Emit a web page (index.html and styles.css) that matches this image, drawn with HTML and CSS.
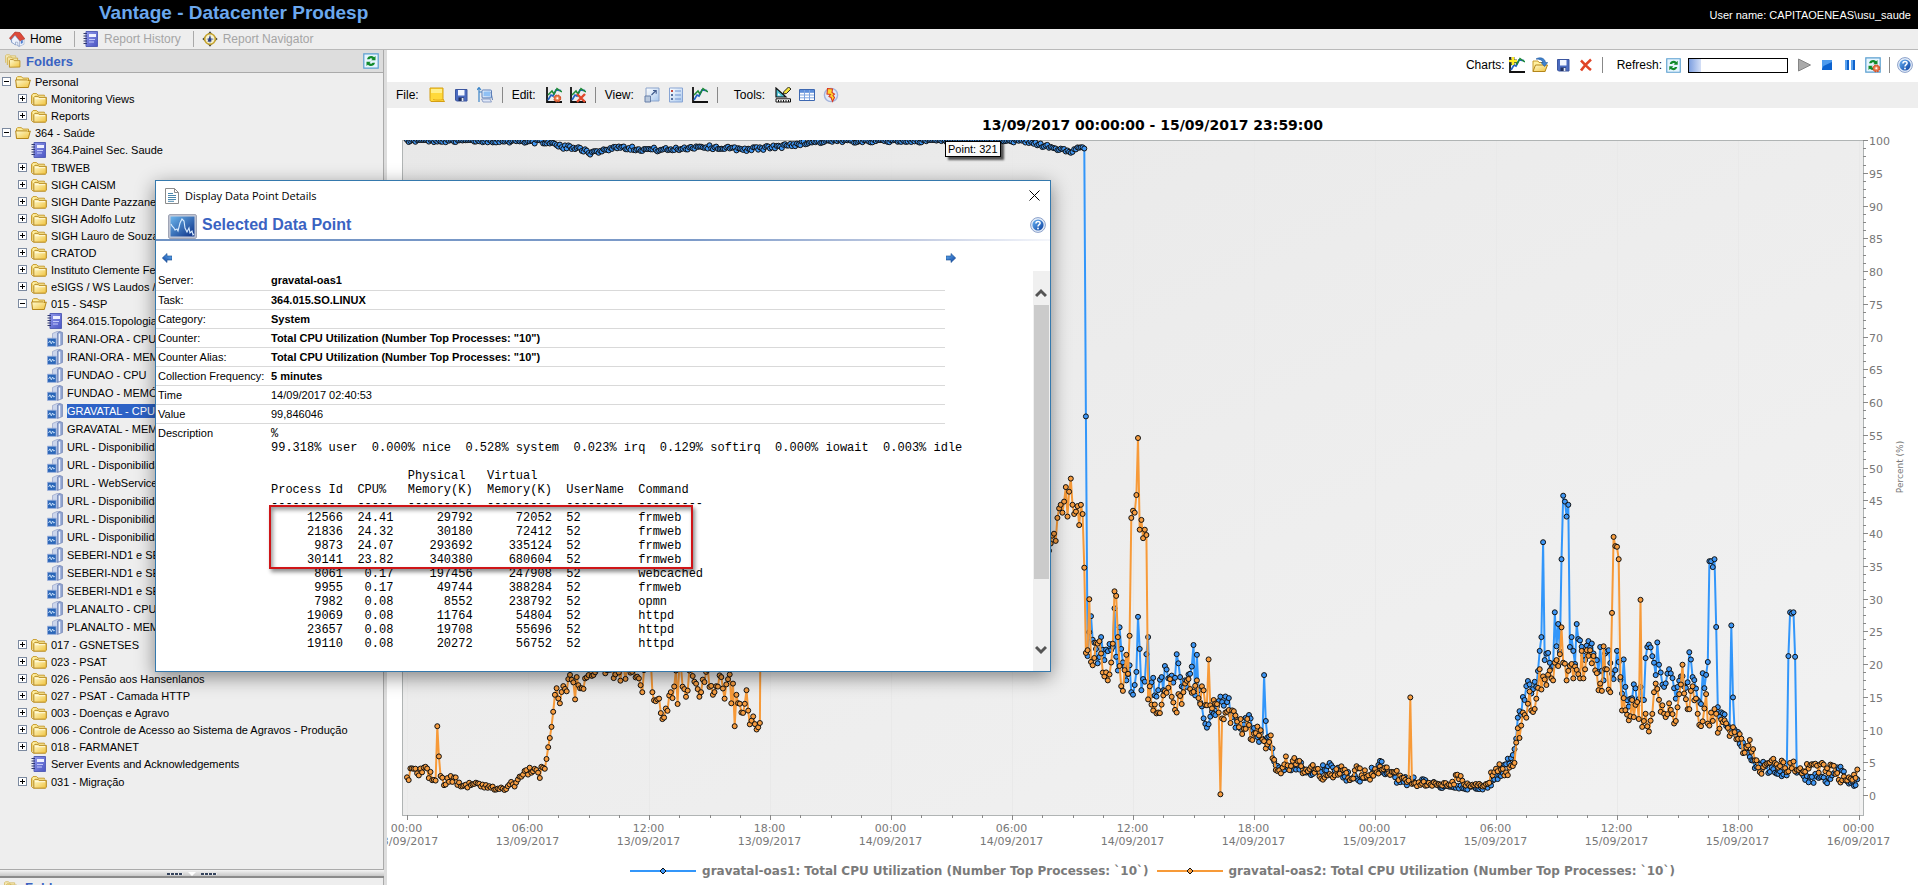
FILE: index.html
```html
<!DOCTYPE html>
<html lang="pt-BR">

<head>
    <meta charset="UTF-8">
    <meta name="viewport" content="width=device-width, initial-scale=1.0">
    <title>Vantage - Datacenter Prodesp</title>
    <link rel="stylesheet" href="styles.css">
</head>

<body>
    <!-- icon sprite -->
    <svg class="sprite" aria-hidden="true">
        <defs>
            <linearGradient id="gFolder" x1="0" y1="0" x2="1" y2="1">
                <stop offset="0" stop-color="#fffbd0"/><stop offset="1" stop-color="#f0c23c"/>
            </linearGradient>
            <linearGradient id="gBlue" x1="0" y1="0" x2="1" y2="1">
                <stop offset="0" stop-color="#6ab4f5"/><stop offset="1" stop-color="#0a3f9e"/>
            </linearGradient>
            <linearGradient id="gBook" x1="0" y1="0" x2="1" y2="1">
                <stop offset="0" stop-color="#8f97ea"/><stop offset="1" stop-color="#4a55c4"/>
            </linearGradient>
            <linearGradient id="gScreen" x1="0" y1="0" x2="1" y2="1">
                <stop offset="0" stop-color="#6bb5ec"/><stop offset="1" stop-color="#0b2f86"/>
            </linearGradient>
            <linearGradient id="gPale" x1="0" y1="0" x2="1" y2="1">
                <stop offset="0" stop-color="#ffffff"/><stop offset="1" stop-color="#a9c8ee"/>
            </linearGradient>
        </defs>
        <symbol id="i-folder" viewBox="0 0 16 16">
            <path d="M.7 12.5V4.2L2 2.6h3.6L7 4.2h6.4v1.2" fill="#fff0a0" stroke="#c79a2a"/>
            <path d="M.7 4.5v8.3l2 1.6" fill="none" stroke="#c79a2a"/>
            <path d="M2.8 14.2V6.6l1.1-1.3h3.2l.8 1h7.4v7l-.9.9z" fill="url(#gFolder)" stroke="#b4861b"/>
            <path d="M4 7.7h10" stroke="#fffbe0"/>
        </symbol>
        <symbol id="i-folder-open" viewBox="0 0 16 16">
            <path d="M1.5 13.5V3.7l1-1h4l1.2 1.4h5.8v2" fill="#fff0a0" stroke="#c79a2a"/>
            <path d="M1.5 13.5L.7 5.9h11.7l.6.7 2.3-.6-2 7.5z" fill="url(#gFolder)" stroke="#b4861b"/>
        </symbol>
        <symbol id="i-folders" viewBox="0 0 18 16">
            <path d="M.6 10V2l1-1h3.6l1 1.2H12V4" fill="#f5e9b8" stroke="#d6bd6c"/>
            <path d="M2.6 12.5V4.5l1-1h3.6l1 1.2h6V7" fill="#f5e3a0" stroke="#c9a845"/>
            <path d="M5 15V7.4l1-1h3.4l1 1.2h6.4v7.2z" fill="url(#gFolder)" stroke="#b98f28"/>
        </symbol>
        <symbol id="i-book" viewBox="0 0 16 16">
            <path d="M3 .5h11.5v15H3z" fill="url(#gBook)" stroke="#5560b8"/>
            <path d="M6 3h7v3H6z" fill="#eef0ff"/>
            <path d="M6 8.5h6M6 11h5" stroke="#c3c9fb"/>
            <path d="M.5 2.5H4M.5 5H4M.5 7.5H4M.5 10H4M.5 12.5H4" stroke="#333a70"/>
        </symbol>
        <symbol id="i-server" viewBox="0 0 16 16">
            <path d="M5.500 2.500L10 .5h3l-2 1.500V15l-5.500-.5z" fill="#ccd6ec" stroke="#93a1c8" stroke-width=".7"/>
            <path d="M10.500 2L13 .5l2.500 1v12l-5 2z" fill="#8ea2d0" stroke="#7385b5" stroke-width=".7"/>
            <path d="M12.500 2.500v11.700" stroke="#f2f5fc" stroke-width="1.500"/>
            <path d="M.4 7.200h8.800v8.200H.4z" fill="#2a66b8" stroke="#9fb3de" stroke-width=".8"/>
            <path d="M1.500 12l1.400-2.200 1.400 3 1.300-2.800 1.200 2.200 1-1" fill="none" stroke="#cfe4fa" stroke-width=".9"/>
        </symbol>
        <symbol id="i-home" viewBox="0 0 16 16">
            <path d="M6 8l5-4 4 4.5v4.7L10 15.5 6 13z" fill="#f5f8ff" stroke="#8ea4cb" stroke-width=".6"/>
            <path d="M1.600 8L5 5.800 6.400 14 2.200 11.200z" fill="#5b86c4"/>
            <path d="M6 1L.4 7.300l1.500 1.200L6 4l4.800 6 5-2.200L11 1.600z" fill="#dd4a3a" stroke="#a82b20" stroke-width=".6"/>
            <path d="M6 4.400L2.600 8.200v3l4 2.800v-3l2.200.3v3.300l1.800.6V10z" fill="#eef3fd" stroke="#7b90ba" stroke-width=".6"/>
            <path d="M11.800 9.800l2-.8v3l-2 .9z" fill="#4b7ed1"/>
        </symbol>
        <symbol id="i-compass" viewBox="0 0 16 16">
            <path d="M8 .3L10.200 3H5.800zM8 15.700L5.800 13h4.400zM.3 8L3 5.800v4.400zM15.700 8L13 10.200V5.800z" fill="#4a4630"/>
            <circle cx="8" cy="8" r="5.300" fill="#f7f3d2" stroke="#c5a32d" stroke-width="1.600"/>
            <path d="M8 3.500L9 7l3 1-3 1.400L8 12.500 7 9.400 4.400 8 7 7z" fill="#7f8fb8"/>
            <path d="M5.500 10.800L8 4.500l1.500 6z" fill="#2d3f7a"/>
        </symbol>
        <symbol id="i-refresh" viewBox="0 0 16 16">
            <path d="M.8.8h14.400v14.400H.8z" fill="#e6f5ff" stroke="#5b9fd0" stroke-width="1.200"/>
            <path d="M4 6.300h2.500c.5-1.300 2-1.500 3-.3L8.200 7.200h4.300V3l-1.300 1.200C8.700 1.900 4.600 3 4 6.300z" fill="#118a2a"/>
            <path d="M12 9.700H9.500c-.5 1.300-2 1.500-3 .3l1.300-1.200H3.500V13l1.300-1.200c2.500 2.300 6.600 1.200 7.200-2.100z" fill="#118a2a"/>
        </symbol>
        <symbol id="i-gear" viewBox="0 0 16 16">
            <circle cx="11.300" cy="11.300" r="3.300" fill="#f3a078" stroke="#d4532a" stroke-width="1.300" stroke-dasharray="1.700 .9"/>
            <circle cx="11.300" cy="11.300" r="2.700" fill="#ee8d60" stroke="#d4532a" stroke-width=".8"/>
            <circle cx="11.300" cy="11.300" r="1" fill="#fff"/>
        </symbol>
        <symbol id="i-chart" viewBox="0 0 16 16">
            <path d="M1 0v15h15" fill="none" stroke="#111" stroke-width="1.800"/>
            <path d="M2 13l3-5 2 1 3-6 5 .6" fill="none" stroke="#2163c4" stroke-width="1.700"/>
            <path d="M2 8l4-4 2 3 3-5.500 2 1.500 3 2" fill="none" stroke="#1c8a35" stroke-width="1.500"/>
        </symbol>
        <symbol id="i-note" viewBox="0 0 16 16">
            <path d="M1 1h13v10.500c.2 1.500.8 2 1.600 3H2c-1-.5-1-1.500-1-3z" fill="#ffd93a" stroke="#d49e12"/>
            <path d="M2 2h11v4H2z" fill="#ffef8a"/>
            <path d="M4 12.500c3 .8 7 .8 10 0" stroke="#e5aa18" fill="none"/>
        </symbol>
        <symbol id="i-save" viewBox="0 0 16 16">
            <path d="M2.500 2.500h11.500v11.500H3.500l-1-1z" fill="#4b6bc0" stroke="#3c569f"/>
            <path d="M5 3h6.500v5.500H5z" fill="#f2f6ff"/>
            <path d="M5.500 10.500h5.500v3.500H5.500z" fill="#20305f"/><path d="M8.700 11h1.800v3H8.700z" fill="#e5ebfa"/>
        </symbol>
        <symbol id="i-export" viewBox="0 0 16 16">
            <path d="M2 15V1M0 3l2-2.500L4 3M2 5h5" fill="none" stroke="#3b84c9" stroke-width="1.200"/>
            <rect x="5" y="3" width="9.500" height="8" rx="1" fill="url(#gPale)" stroke="#5d7fb8"/>
            <path d="M6.500 4.500H13v4.500H6.500z" fill="#8fc0f4"/>
            <path d="M4.500 12h8.500l1.500 3H6z" fill="#dfe7f7" stroke="#7a8fbd" stroke-width=".8"/>
            <path d="M14 5l1.500 8" stroke="#5d7fb8"/>
        </symbol>
        <symbol id="i-cross" viewBox="0 0 16 16">
            <path d="M3 3.500c2 2 6 6.500 10 9.500M13 2.500C9 6 6 9 3 13.500" fill="none" stroke="#e04427" stroke-width="2.600"/>
        </symbol>
        <symbol id="i-resize" viewBox="0 0 16 16">
            <path d="M2 1h13v13H6" fill="url(#gPale)" stroke="#8ba4cc"/>
            <path d="M2 1v8" stroke="#8ba4cc"/>
            <path d="M1 9h5.500v6H1z" fill="#b9c8dd" stroke="#667fa8"/>
            <path d="M7.500 8L12 3.500M9 3.500h3.200v3.200" fill="none" stroke="#3f5a8c" stroke-width="1.100"/>
        </symbol>
        <symbol id="i-list" viewBox="0 0 16 16">
            <path d="M1.500 1h13v14h-13z" fill="url(#gPale)" stroke="#88a5d4"/>
            <path d="M3 3h2v2H3z" fill="#c4473c"/><path d="M3 7h2v2H3zM3 11h2v2H3z" fill="#56719f"/>
            <path d="M7 4h6M7 8h6M7 12h6" stroke="#6f93d0"/>
        </symbol>
        <symbol id="i-design" viewBox="0 0 16 16">
            <path d="M1 1v9h10z" fill="#4cc2d4" stroke="#111" stroke-width="1.200"/><path d="M3 6v2.500h3z" fill="#fff"/>
            <path d="M8 7l1-2.500L13.500 0 16 2l-4.500 4.500z" fill="#f2e13a" stroke="#111" stroke-width=".9"/>
            <path d="M1 11.800h14.500V15H1z" fill="#fff" stroke="#111"/>
            <path d="M3.500 13v2M6 13v2M8.500 13v2M11 13v2M13.500 13v2" stroke="#111"/>
        </symbol>
        <symbol id="i-table" viewBox="0 0 16 16">
            <path d="M.5 2.500h15v11H.5z" fill="#fff" stroke="#3d68b1"/><path d="M1 3h14v2.500H1z" fill="#5c8edb"/>
            <path d="M1 5.500h14M1 8h14M1 10.800h14M5.500 3v10M10.500 3v10" stroke="#7ea5e0"/>
        </symbol>
        <symbol id="i-bolt" viewBox="0 0 16 16">
            <circle cx="8" cy="8" r="6.600" fill="#e3eaf8" stroke="#a4b4dc" stroke-width="1.400"/>
            <path d="M4.500 1.500l5 .5-.5 3.500 2.500 1.500-1.500 1.500 1.500 2-2 4-1.500-4-2-1 1.500-2L4 7z" fill="#ffd72e" stroke="#d93a22" stroke-width="1.100"/>
        </symbol>
        <symbol id="i-import" viewBox="0 0 16 16">
            <path d="M1 14.500V4h5l1 1.500h6v9z" fill="#fff0a0" stroke="#c79a2a"/>
            <path d="M1 14.500l2.500-6.500h12l-2.500 6.500z" fill="url(#gFolder)" stroke="#b4861b"/>
            <path d="M4 2c4-2.500 9-1 9.500 3.500h2.200L12.500 9.500 9 5.500h2C10.500 3 8 2.200 4 2z" fill="#3f83cf" stroke="#24589c" stroke-width=".6"/>
        </symbol>
        <symbol id="i-help" viewBox="0 0 16 16">
            <circle cx="8" cy="8" r="7.400" fill="#e6eefa" stroke="#8ba0c9"/>
            <circle cx="8" cy="8" r="5.600" fill="url(#gBlue)"/>
            <path d="M5.900 6.600c0-3 4.400-2.800 4.200-.3C10 7.700 8 7.700 8 9.500" fill="none" stroke="#fff" stroke-width="1.500"/>
            <circle cx="8" cy="11.500" r=".9" fill="#fff"/>
        </symbol>
        <symbol id="i-play" viewBox="0 0 16 16"><path d="M2.500 2l12 6-12 6z" fill="#aaa" stroke="#858585"/></symbol>
        <symbol id="i-stop" viewBox="0 0 16 16"><path d="M3 3h10v10H3z" fill="#0b62cf"/><path d="M3 3h10v2L4.500 9 3 12z" fill="#4d9bee"/></symbol>
        <symbol id="i-pause" viewBox="0 0 16 16"><path d="M3 3h4v10H3zM9 3h4v10H9z" fill="#0f62cc"/><path d="M3 3h2v10H3zM9 3h2v10H9z" fill="#5ca3ee"/></symbol>
        <symbol id="i-doc" viewBox="0 0 14 16">
            <path d="M.5.5h9l4 4v11H.5z" fill="#fff" stroke="#8b8b8b"/><path d="M9.500.5v4h4" fill="none" stroke="#8b8b8b"/>
            <path d="M3 5.500h5M3 7.500h8M3 9.500h8M3 11.500h8M3 13.300h6" stroke="#4a87ad"/>
        </symbol>
        <symbol id="i-wave" viewBox="0 0 29 25">
            <rect x=".7" y=".7" width="27.600" height="23.600" rx="1" fill="#c9cedc" stroke="#8e94a8"/>
            <path d="M2.500 2.500h24v20h-24z" fill="url(#gScreen)"/>
            <path d="M3 10l1 2 2 2 1 2 2-1 1 2 2-8 2-4 2 2 1 7 2 4 2-4 1 5 2-2 1 4 1-1" fill="none" stroke="#d9ecff" stroke-width="1.100"/>
        </symbol>
        <symbol id="i-arrow" viewBox="0 0 10 10"><path d="M0 3h5V.500L9.700 5 5 9.500V7H0z" fill="url(#gBlue)" stroke="#12468c" stroke-width=".6"/></symbol>
    </svg>

    <header class="banner">
        <h1 class="banner-title">Vantage - Datacenter Prodesp</h1>
        <span class="banner-user">User name: CAPITAOENEAS\usu_saude</span>
    </header>

    <nav class="menu">
        <a class="menu-item" href="#"><svg class="icon"><use href="#i-home"/></svg>Home</a>
        <a class="menu-item disabled" href="#"><svg class="icon"><use href="#i-book"/></svg>Report History</a>
        <a class="menu-item disabled" href="#"><svg class="icon"><use href="#i-compass"/></svg>Report Navigator</a>
    </nav>

    <div class="workspace">
        <aside class="sidebar">
            <div class="panel-head">
                <svg class="icon"><use href="#i-folders"/></svg>
                <h2 class="panel-title">Folders</h2>
                <button class="icon-btn" type="button" aria-label="Refresh folders"><svg class="icon"><use href="#i-refresh"/></svg></button>
            </div>
            <ul class="tree" id="tree"></ul>
            <div class="splitter">
                <i class="dots"></i><i class="down"></i><i class="dots"></i>
            </div>
            <div class="panel-next">
                <svg class="icon"><use href="#i-folders"/></svg>
                <span class="panel-title">Folders</span>
            </div>
        </aside>

        <main class="main">
            <div class="bar bar-top">
                <span class="bar-label">Charts:</span>
                <button class="icon-btn" type="button" aria-label="New chart"><svg class="icon"><use href="#i-chart"/><path d="M4 0v8M0 4h8" stroke="#6d6414" stroke-width="3"/><path d="M4 0v8M0 4h8" stroke="#ffee22" stroke-width="2"/></svg></button>
                <button class="icon-btn" type="button" aria-label="Open chart"><svg class="icon"><use href="#i-import"/></svg></button>
                <button class="icon-btn" type="button" aria-label="Save chart"><svg class="icon"><use href="#i-save"/></svg></button>
                <button class="icon-btn" type="button" aria-label="Delete chart"><svg class="icon"><use href="#i-cross"/></svg></button>
                <i class="sep wide"></i>
                <span class="bar-label">Refresh:</span>
                <button class="icon-btn" type="button" aria-label="Refresh"><svg class="icon small"><use href="#i-refresh"/></svg></button>
                <div class="progress"><div class="progress-fill"></div></div>
                <button class="icon-btn" type="button" aria-label="Play"><svg class="icon"><use href="#i-play"/></svg></button>
                <button class="icon-btn" type="button" aria-label="Stop"><svg class="icon"><use href="#i-stop"/></svg></button>
                <button class="icon-btn" type="button" aria-label="Pause"><svg class="icon"><use href="#i-pause"/></svg></button>
                <button class="icon-btn" type="button" aria-label="Refresh options"><svg class="icon"><use href="#i-refresh"/><use href="#i-gear"/></svg></button>
                <i class="sep"></i>
                <button class="icon-btn" type="button" aria-label="Help"><svg class="icon"><use href="#i-help"/></svg></button>
            </div>
            <div class="bar bar-tools">
                <span class="bar-label">File:</span>
                <button class="icon-btn" type="button" aria-label="Notes"><svg class="icon"><use href="#i-note"/></svg></button>
                <button class="icon-btn" type="button" aria-label="Save"><svg class="icon"><use href="#i-save"/></svg></button>
                <button class="icon-btn" type="button" aria-label="Export"><svg class="icon"><use href="#i-export"/></svg></button>
                <i class="sep"></i>
                <span class="bar-label">Edit:</span>
                <button class="icon-btn" type="button" aria-label="Edit chart"><svg class="icon"><use href="#i-chart"/><use href="#i-gear"/></svg></button>
                <button class="icon-btn" type="button" aria-label="Remove chart"><svg class="icon"><use href="#i-chart"/><path d="M7 7l8 8M15 7l-8 8" stroke="#e0482a" stroke-width="2.400"/></svg></button>
                <i class="sep"></i>
                <span class="bar-label">View:</span>
                <button class="icon-btn" type="button" aria-label="Resize"><svg class="icon"><use href="#i-resize"/></svg></button>
                <button class="icon-btn" type="button" aria-label="Legend"><svg class="icon"><use href="#i-list"/></svg></button>
                <button class="icon-btn" type="button" aria-label="Chart"><svg class="icon"><use href="#i-chart"/></svg></button>
                <i class="sep wide"></i>
                <span class="bar-label">Tools:</span>
                <button class="icon-btn" type="button" aria-label="Design"><svg class="icon"><use href="#i-design"/></svg></button>
                <button class="icon-btn" type="button" aria-label="Table"><svg class="icon"><use href="#i-table"/></svg></button>
                <button class="icon-btn" type="button" aria-label="Alerts"><svg class="icon"><use href="#i-bolt"/></svg></button>
            </div>

            <section class="report">
                <h2 class="report-title">13/09/2017 00:00:00 - 15/09/2017 23:59:00</h2>
                <svg class="chart" id="chart" role="img" aria-label="Total CPU Utilization"></svg>
                <div class="legend">
                    <span class="legend-item"><svg class="legend-key blue"><path d="M0 5h66"/><path class="mark" d="M33 2l3 3-3 3-3-3z"/></svg>gravatal-oas1: Total CPU Utilization (Number Top Processes: `10`)</span>
                    <span class="legend-item"><svg class="legend-key orange"><path d="M0 5h66"/><path class="mark" d="M33 2l3 3-3 3-3-3z"/></svg>gravatal-oas2: Total CPU Utilization (Number Top Processes: `10`)</span>
                </div>
            </section>
            <div class="tooltip">Point: 321</div>
        </main>
    </div>

    <section class="dialog" role="dialog" aria-labelledby="dialogTitle">
        <div class="dialog-bar">
            <svg class="doc-icon"><use href="#i-doc"/></svg>
            <span id="dialogTitle">Display Data Point Details</span>
            <button class="close" type="button" aria-label="Close"><svg class="close-icon"><path d="M.5.5l10 10M10.500.5l-10 10"/></svg></button>
        </div>
        <div class="dialog-head">
            <svg class="wave-icon"><use href="#i-wave"/></svg>
            <h2 class="dialog-heading">Selected Data Point</h2>
            <button class="icon-btn" type="button" aria-label="Help"><svg class="icon"><use href="#i-help"/></svg></button>
        </div>
        <div class="dialog-nav">
            <button class="icon-btn" type="button" aria-label="Previous point"><svg class="arrow back"><use href="#i-arrow"/></svg></button>
            <button class="icon-btn" type="button" aria-label="Next point"><svg class="arrow"><use href="#i-arrow"/></svg></button>
        </div>
        <div class="dialog-body">
            <div class="dialog-content">
                <table class="details">
                    <tr><th scope="row">Server:</th><td><b>gravatal-oas1</b></td></tr>
                    <tr><th scope="row">Task:</th><td><b>364.015.SO.LINUX</b></td></tr>
                    <tr><th scope="row">Category:</th><td><b>System</b></td></tr>
                    <tr><th scope="row">Counter:</th><td><b>Total CPU Utilization (Number Top Processes: "10")</b></td></tr>
                    <tr><th scope="row">Counter Alias:</th><td><b>Total CPU Utilization (Number Top Processes: "10")</b></td></tr>
                    <tr><th scope="row">Collection Frequency:</th><td><b>5 minutes</b></td></tr>
                    <tr><th scope="row">Time</th><td>14/09/2017 02:40:53</td></tr>
                    <tr><th scope="row">Value</th><td>99,846046</td></tr>
                    <tr class="last"><th scope="row">Description</th><td>
                        <div class="output">
<pre>%
99.318% user  0.000% nice  0.528% system  0.023% irq  0.129% softirq  0.000% iowait  0.003% idle

                   Physical   Virtual
Process Id  CPU%   Memory(K)  Memory(K)  UserName  Command
----------  -----  ---------  ---------  --------  ---------
     12566  24.41      29792      72052  52        frmweb
     21836  24.32      30180      72412  52        frmweb
      9873  24.07     293692     335124  52        frmweb
     30141  23.82     340380     680604  52        frmweb
      8061   0.17     197456     247908  52        webcached
      9955   0.17      49744     388284  52        frmweb
      7982   0.08       8552     238792  52        opmn
     19069   0.08      11764      54804  52        httpd
     23657   0.08      19708      55696  52        httpd
     19110   0.08      20272      56752  52        httpd</pre>
                            <div class="highlight"></div>
                        </div>
                    </td></tr>
                </table>
            </div>
            <div class="scrollbar">
                <button class="scroll-btn" type="button" aria-label="Scroll up"><svg class="chevron"><path d="M1 8l5-5 5 5"/></svg></button>
                <div class="scroll-thumb"></div>
                <button class="scroll-btn down" type="button" aria-label="Scroll down"><svg class="chevron"><path d="M1 2l5 5 5-5"/></svg></button>
            </div>
        </div>
    </section>

    <script src="script.js"></script>
</body>

</html>
```

FILE: styles.css
```css
* {
    box-sizing: border-box;
}

body {
    margin: 0;
    height: 100vh;
    display: flex;
    flex-direction: column;
    overflow: hidden;
    font-family: "Liberation Sans", Arial, sans-serif;
    font-size: 12px;
    color: #000;
    background-color: #fff;
}

h1,
h2,
pre,
ul {
    margin: 0;
    padding: 0;
}

.sprite {
    position: absolute;
    width: 0;
    height: 0;
}

.icon {
    display: block;
    width: 16px;
    height: 16px;
    flex: none;
}

.icon.small {
    width: 15px;
    height: 15px;
}

.icon-btn {
    padding: 0;
    border: 0;
    background: none;
    cursor: pointer;
}

/* top banner and menu */
.banner {
    flex: none;
    height: 29px;
    padding: 0 7px 3px 99px;
    display: flex;
    align-items: center;
    justify-content: space-between;
    background-color: #000;
}

.banner-title {
    font-size: 19px;
    line-height: 22px;
    color: #6ba8ee;
}

.banner-user {
    font-size: 11px;
    padding-top: 3px;
    color: #fff;
}

.menu {
    flex: none;
    height: 21px;
    padding-left: 9px;
    display: flex;
    align-items: center;
    background-color: #eee;
    border-bottom: 1px solid #b9b9b9;
}

.menu-item {
    display: flex;
    align-items: center;
    gap: 5px;
    height: 16px;
    padding-right: 12px;
    margin-right: 8px;
    color: #000;
    text-decoration: none;
    border-right: 1px solid #aaa;
}

.menu-item:last-child {
    border-right: 0;
}

.menu-item.disabled {
    color: #a5a5a5;
}

.workspace {
    flex: 1;
    min-height: 0;
    display: flex;
}

/* folder tree */
.sidebar {
    flex: none;
    width: 387px;
    display: flex;
    flex-direction: column;
    background-color: #eee;
    border-right: 3px solid #ddd;
    box-shadow: inset -1px 0 #aaa;
}

.panel-head {
    height: 23px;
    padding: 0 4px 0 5px;
    display: flex;
    align-items: center;
    gap: 5px;
    background-color: #ddd;
    border-bottom: 1px solid #aaa;
    border-right: 1px solid #aaa;
}

.panel-title {
    flex: 1;
    font-size: 13px;
    font-weight: bold;
    color: #3a63c2;
}

.tree {
    flex: 1;
    min-height: 0;
    list-style: none;
    font-size: 11px;
}

.tree-item {
    height: 17px;
    display: flex;
    align-items: center;
    gap: 4px;
    padding-left: 2px;
    white-space: nowrap;
}

.tree-item.report-item {
    height: 18px;
}

.tree-item.level-1 {
    padding-left: 18px;
}

.tree-item.level-2 {
    padding-left: 34px;
}

.tree-item .toggle {
    position: relative;
    flex: none;
    width: 9px;
    height: 9px;
    padding: 0;
    border: 1px solid #7c8aa0;
    background: linear-gradient(#fff 3px, #000 3px, #000 4px, #fff 4px) center / 5px 7px no-repeat #fff;
}

.tree-item .toggle.plus::after {
    content: "";
    position: absolute;
    left: 3px;
    top: 1px;
    width: 1px;
    height: 5px;
    background-color: #000;
}

.tree-item .toggle.none {
    visibility: hidden;
}

.tree-item a {
    line-height: 14px;
    color: #000;
    text-decoration: none;
}

.tree-item a.selected {
    color: #fff;
    background-color: #2d62c6;
}

.splitter {
    height: 9px;
    display: flex;
    align-items: center;
    justify-content: center;
    gap: 5px;
    background: linear-gradient(#aaa 1px, #f4f4f4 1px, #c8c8c8 7px, #8b8b8b 7px);
}

.splitter .dots {
    width: 16px;
    height: 2px;
    background: repeating-linear-gradient(90deg, #34435c 0 3px, #eee 3px 4px);
}

.splitter .down {
    border: 4px solid transparent;
    border-top-color: #fff;
    border-bottom: 0;
}

.panel-next {
    height: 7px;
    padding: 2px 4px 0;
    display: flex;
    gap: 5px;
    overflow: hidden;
}

/* toolbars */
.main {
    position: relative;
    flex: 1;
    min-width: 0;
    display: flex;
    flex-direction: column;
}

.bar {
    flex: none;
    display: flex;
    align-items: center;
    gap: 8px;
}

.bar-top {
    height: 32px;
    padding: 0 4px 2px 0;
    justify-content: flex-end;
    gap: 6px;
}

.bar-top .icon-btn {
    margin-right: 1px;
}

.bar-top .bar-label {
    margin-right: -2px;
}

.bar-tools {
    height: 26px;
    padding-left: 9px;
    background-color: #eee;
}

.bar-label + .icon-btn {
    margin-left: 2px;
}

.bar-top .bar-label + .icon-btn {
    margin-left: 0;
}

.sep {
    width: 1px;
    height: 16px;
    margin: 0 1px;
    background-color: #888;
}

.sep.wide {
    margin-right: 8px;
}

.progress {
    width: 100px;
    height: 15px;
    margin-right: 2px;
    border: 1px solid #000;
    background-color: #fff;
}

.progress-fill {
    width: 12px;
    height: 13px;
    background: linear-gradient(90deg, #7d9fe0, #d5e0f7);
}

/* chart */
.report {
    flex: 1;
    min-height: 0;
    display: flex;
    flex-direction: column;
}

.report-title {
    height: 24px;
    padding-top: 9px;
    font: bold 14px/16px "DejaVu Sans", Verdana, sans-serif;
    text-align: center;
}

.chart {
    display: block;
    width: 100%;
    flex: 1;
    min-height: 0;
    font-family: "DejaVu Sans", Verdana, sans-serif;
    font-size: 11px;
    fill: #777;
}

.chart .axis {
    stroke: #b0b4b4;
    fill: none;
}

.chart .tick {
    stroke: #888;
}

.chart .grid {
    stroke: #e9e9e9;
}

.chart .unit {
    font-size: 9px;
}

.series {
    fill: none;
    stroke-width: 2;
    stroke-linejoin: round;
}

.blue {
    stroke: #3296fa;
}

.orange {
    stroke: #f79a38;
}

.marker {
    stroke: #111;
    stroke-width: 1;
}

.marker.fill-blue,
.blue .mark {
    fill: #3f97f5;
}

.marker.fill-orange,
.orange .mark {
    fill: #f79d40;
}

.legend {
    height: 29px;
    padding-top: 1px;
    display: flex;
    align-items: center;
    justify-content: center;
    gap: 8px;
    font: bold 12px/16px "DejaVu Sans", Verdana, sans-serif;
    color: #7a7a7a;
}

.legend-item {
    display: flex;
    align-items: center;
    gap: 6px;
    white-space: nowrap;
}

.legend-key {
    width: 66px;
    height: 10px;
    stroke-width: 2;
}

.legend-key .mark {
    stroke: #111;
    stroke-width: 1;
}

.tooltip {
    position: absolute;
    left: 558px;
    top: 91px;
    padding: 0 2px;
    font-size: 11px;
    line-height: 14px;
    border: 1px solid #000;
    background-color: #fafafa;
    box-shadow: 3px 3px 2px rgba(0, 0, 0, 0.65);
}

/* data point window */
.dialog {
    position: absolute;
    left: 155px;
    top: 180px;
    width: 896px;
    height: 492px;
    display: flex;
    flex-direction: column;
    border: 1px solid #3579ad;
    background-color: #fff;
    box-shadow: 0 5px 18px rgba(0, 0, 0, 0.45);
}

.dialog-bar {
    height: 29px;
    padding: 0 10px 0 9px;
    display: flex;
    align-items: center;
    gap: 6px;
    font: 11px "Open Sans", "Segoe UI", sans-serif;
}

.doc-icon {
    width: 14px;
    height: 16px;
}

.close {
    margin-left: auto;
    padding: 0;
    border: 0;
    background: none;
}

.close-icon {
    display: block;
    width: 11px;
    height: 11px;
    stroke: #000;
}

.dialog-head {
    height: 31px;
    padding: 4px 4px 2px 12px;
    display: flex;
    align-items: center;
    gap: 5px;
    background: linear-gradient(90deg, #7093c4, #7d9bc9 60%, #c3cce2 85%, #f4f6fb) bottom / 100% 2px no-repeat;
}

.wave-icon {
    width: 29px;
    height: 25px;
}

.dialog-heading {
    flex: 1;
    font-size: 16px;
    line-height: 20px;
    padding-bottom: 3px;
    color: #3a63c2;
}

.dialog-head .icon-btn {
    padding-bottom: 4px;
}

.dialog-nav {
    height: 30px;
    width: 806px;
    padding: 3px 6px 0;
    display: flex;
    align-items: center;
    justify-content: space-between;
}

.arrow {
    display: block;
    width: 10px;
    height: 10px;
}

.arrow.back {
    transform: scaleX(-1);
}

.dialog-body {
    flex: 1;
    min-height: 0;
    display: flex;
}

.dialog-content {
    flex: 1;
    min-width: 0;
    overflow: hidden;
    padding-right: 88px;
}

.details {
    width: 100%;
    table-layout: fixed;
    border-collapse: collapse;
    font-size: 11px;
    line-height: 14px;
}

.details th,
.details td {
    height: 19px;
    padding: 2px 0 2px 2px;
    font-weight: normal;
    text-align: left;
    vertical-align: top;
    border-bottom: 1px solid #d9d9d9;
}

.details th {
    width: 113px;
    white-space: nowrap;
}

.details .last th,
.details .last td {
    border-bottom: 0;
}

.output {
    position: relative;
    padding-top: 1px;
}

.output pre {
    font: 12px/14px "Liberation Mono", "Courier New", monospace;
}

.highlight {
    position: absolute;
    left: -2px;
    top: 79px;
    width: 424px;
    height: 64px;
    border: 2px solid #cf1518;
    box-shadow: 2px 3px 4px rgba(0, 0, 0, 0.45), inset 2px 3px 4px rgba(0, 0, 0, 0.4);
}

.scrollbar {
    width: 17px;
    padding: 0 1px;
    display: flex;
    flex-direction: column;
    background-color: #f0f0f0;
}

.scroll-btn {
    height: 34px;
    padding: 9px 0 0 1px;
    border: 0;
    background: none;
}

.scroll-btn.down {
    margin-top: auto;
    padding: 0 0 8px 1px;
}

.chevron {
    display: block;
    width: 12px;
    height: 10px;
    fill: none;
    stroke: #555;
    stroke-width: 3;
}

.scroll-thumb {
    height: 274px;
    background-color: #cbcbcb;
}
```

FILE: script.js
```js
// [level, icon, label, toggle state]
const treeItems = [
    [0, 'folder-open', 'Personal', 'minus'],
    [1, 'folder', 'Monitoring Views', 'plus'],
    [1, 'folder', 'Reports', 'plus'],
    [0, 'folder-open', '364 - Saúde', 'minus'],
    [1, 'book', '364.Painel Sec. Saude'],
    [1, 'folder', 'TBWEB', 'plus'],
    [1, 'folder', 'SIGH CAISM', 'plus'],
    [1, 'folder', 'SIGH Dante Pazzanes', 'plus'],
    [1, 'folder', 'SIGH Adolfo Lutz', 'plus'],
    [1, 'folder', 'SIGH Lauro de Souza', 'plus'],
    [1, 'folder', 'CRATOD', 'plus'],
    [1, 'folder', 'Instituto Clemente Fer', 'plus'],
    [1, 'folder', 'eSIGS / WS Laudos /', 'plus'],
    [1, 'folder-open', '015 - S4SP', 'minus'],
    [2, 'book', '364.015.Topologia'],
    [2, 'server', 'IRANI-ORA - CPU'],
    [2, 'server', 'IRANI-ORA - MEMÓRIA'],
    [2, 'server', 'FUNDAO - CPU'],
    [2, 'server', 'FUNDAO - MEMÓRIA'],
    [2, 'server', 'GRAVATAL - CPU', 'selected'],
    [2, 'server', 'GRAVATAL - MEMÓRIA'],
    [2, 'server', 'URL - Disponibilidade'],
    [2, 'server', 'URL - Disponibilidade'],
    [2, 'server', 'URL - WebService'],
    [2, 'server', 'URL - Disponibilidade'],
    [2, 'server', 'URL - Disponibilidade'],
    [2, 'server', 'URL - Disponibilidade'],
    [2, 'server', 'SEBERI-ND1 e SEBERI'],
    [2, 'server', 'SEBERI-ND1 e SEBERI'],
    [2, 'server', 'SEBERI-ND1 e SEBERI'],
    [2, 'server', 'PLANALTO - CPU'],
    [2, 'server', 'PLANALTO - MEMÓRIA'],
    [1, 'folder', '017 - GSNETSES', 'plus'],
    [1, 'folder', '023 - PSAT', 'plus'],
    [1, 'folder', '026 - Pensão aos Hansenlanos', 'plus'],
    [1, 'folder', '027 - PSAT - Camada HTTP', 'plus'],
    [1, 'folder', '003 - Doenças e Agravo', 'plus'],
    [1, 'folder', '006 - Controle de Acesso ao Sistema de Agravos - Produção', 'plus'],
    [1, 'folder', '018 - FARMANET', 'plus'],
    [1, 'book', 'Server Events and Acknowledgements'],
    [1, 'folder', '031 - Migração', 'plus']
];

function renderTree() {
    document.getElementById('tree').innerHTML = treeItems.map(([level, icon, label, state]) => {
        const isFolder = icon.startsWith('folder');
        const toggle = isFolder
            ? `<button class="toggle ${state}" type="button" aria-label="Toggle ${label}"></button>`
            : '<span class="toggle none"></span>';
        return `<li class="tree-item level-${level}${isFolder ? '' : ' report-item'}">${toggle}` +
            `<svg class="icon"><use href="#i-${icon}"/></svg>` +
            `<a href="#"${state === 'selected' ? ' class="selected"' : ''}>${label}</a></li>`;
    }).join('');
}

// hour since 13/09 00:00, percent
const oas1 = [
    [0, 100], [5, 99.9], [7, 99.7], [7.7, 98.9], [8.5, 98.9], [9, 98], [9.8, 98.5], [10.5, 99], [11.5, 98.6], [13, 98.5],
    [14.5, 99], [16, 98.7], [17, 98.6], [18.5, 99], [20, 99.7], [22, 99.9], [30.5, 99.9], [31.3, 99.3], [32.2, 98.7],
    [32.8, 98.2], [33.1, 98.6], [33.55, 98.7], [33.65, 57.8], [33.74, 21.2], [33.93, 27.3], [34, 23.7], [34.26, 20.1],
    [34.39, 24.1], [34.6, 20.6], [34.67, 22.2], [35, 22.6], [35.08, 28.5], [35.16, 21.1], [35.25, 19], [35.35, 25.6],
    [35.43, 22.3], [35.63, 17.5], [35.83, 19.8], [35.9, 15.7], [36.08, 16.8], [36.16, 18.8], [36.24, 27.2],
    [36.32, 22.3], [36.42, 16], [36.57, 17.3], [36.65, 21.5], [36.74, 24.1], [36.85, 15], [36.97, 17.9], [37.07, 15.2],
    [37.4, 18], [37.48, 16], [37.56, 19.7], [37.75, 17.8], [38.06, 17.9], [38.16, 21.5], [38.24, 20.1], [38.33, 18],
    [38.64, 16.5], [38.8, 18.5], [38.9, 19.6], [39, 22.9], [39.08, 15.2], [39.16, 21.4], [39.25, 16], [39.5, 11.7],
    [39.74, 10.8], [39.96, 12.4], [40.2, 13.5], [40.4, 14.2], [40.74, 14.8], [40.95, 11.9], [41.3, 10.1],
    [41.8, 11.7], [41.94, 9.9], [42.24, 8.1], [42.44, 8.6], [42.52, 18.3], [42.6, 11.3], [42.68, 8.8], [42.93, 7.1],
    [43.1, 4.5], [43.5, 3.8], [44, 4.6], [45, 3.5], [45.7, 4.4], [46.5, 2.8], [47.5, 2.6], [48.3, 5.1], [48.4, 3.4],
    [49.4, 2], [50.3, 2.4], [51.2, 1.4], [52, 1.1], [53.6, 1.1], [54.2, 3], [54.5, 4.7], [54.8, 6.1], [54.9, 7],
    [55.07, 11.8], [55.17, 12.8], [55.4, 14.5], [55.6, 17.4], [55.75, 15.5], [56, 16.5], [56.16, 22], [56.26, 24.1],
    [56.35, 38.6], [56.43, 20.6], [56.6, 21.7], [56.8, 19.7], [56.9, 27.9], [57, 22.7], [57.1, 26.1], [57.18, 21.9],
    [57.26, 36], [57.35, 45.7], [57.43, 44.8], [57.51, 42.5], [57.6, 44.3], [57.7, 22.6], [57.78, 24.1], [57.9, 20],
    [58, 26.1], [58.1, 23.8], [58.2, 23.6], [58.4, 20.6], [58.6, 23.5], [58.7, 22.5], [59, 20.6], [59.1, 18.8],
    [59.2, 22.6], [59.3, 17.5], [59.4, 21.6], [59.6, 22.1], [59.8, 17.7], [60, 22], [60.1, 20.3], [60.25, 15.5],
    [60.34, 20.7], [60.43, 16.5], [60.6, 13.5], [60.8, 16.9], [61, 13.7], [61.2, 16.5], [61.36, 14.5], [61.44, 20.9],
    [61.52, 22.6], [61.8, 20.2], [61.88, 18.3], [62, 23.3], [62.16, 18.7], [62.36, 16.5], [62.6, 19.2], [62.8, 16.3],
    [62.9, 14.7], [63.2, 18.1], [63.5, 17.2], [63.6, 21.8], [63.75, 18], [64, 14.5], [64.17, 13.9], [64.26, 18.6],
    [64.35, 16.3], [64.5, 20.3], [64.6, 35.7], [64.68, 35.7], [64.76, 34.8], [64.85, 36], [64.97, 13.4], [65.3, 12.3],
    [65.6, 9.9], [65.68, 25.9], [65.77, 14.9], [65.86, 10], [66.1, 7.8], [66.4, 6.8], [66.8, 4.1], [67.1, 4.6],
    [67.8, 3.4], [68.42, 3], [68.51, 21.2], [68.6, 27.9], [68.68, 27.7], [68.77, 27.9], [68.86, 21.1], [68.94, 3.4],
    [69.3, 2.3], [70, 2.6], [70.4, 1.8], [70.7, 3], [71.1, 4.3], [71.3, 2.4], [71.8, 1.5], [71.93, 2.4]
];

const oas2 = [
    [0, 2.7], [.3, 4], [.6, 3], [.85, 4.2], [1.3, 2.3], [1.38, 2.2], [1.46, 10.5], [1.55, 5.9], [1.65, 2.9], [1.95, 1.6], [2.2, 2.9],
    [2.7, 1.3], [3.3, 1.7], [4, 1.1], [4.88, .9], [5.15, 2], [5.3, 1.3], [5.7, 2.8], [5.9, 3.8], [6.3, 4], [6.57, 2.6],
    [6.66, 4.3], [6.8, 4], [6.91, 5.5], [6.99, 7.3], [7.07, 8.7], [7.16, 10.4], [7.24, 12.7], [7.33, 15.3], [7.42, 16.3],
    [7.6, 14], [7.8, 16.2], [8, 17.7], [8.2, 17.6], [8.35, 14.6], [8.45, 18], [8.7, 16.3], [9, 18.3], [9.5, 20], [10.5, 18.7],
    [11.5, 17.8], [11.7, 15.7], [11.8, 21], [12.1, 21], [12.2, 15.7], [12.43, 14.6], [12.6, 12.5], [12.85, 13.2],
    [13.05, 15.7], [13.2, 14.8], [13.3, 19], [13.4, 13.9], [13.5, 20], [13.8, 15], [14, 19], [14.25, 17.3], [14.6, 15.7],
    [14.83, 18.8], [15.2, 15.3], [15.55, 18], [15.75, 14.7], [16, 18.4], [16.1, 14], [16.19, 17], [16.27, 10.5], [16.36, 15.3],
    [16.6, 12.6], [16.85, 16], [17, 10.8], [17.15, 12], [17.32, 10], [17.48, 11], [17.56, 52], [20, 50], [24, 45], [31.94, 38.4],
    [32.11, 39.9], [32.2, 38.8], [32.29, 42.3], [32.4, 44.3], [32.49, 43.1], [32.65, 47], [32.79, 42.5], [32.9, 48.3],
    [32.98, 44.3], [33.06, 42.9], [33.23, 44.1], [33.31, 41.2], [33.39, 44.3], [33.48, 42.9], [33.56, 34.7], [33.65, 21.7],
    [33.74, 22.1], [33.82, 29.9], [33.9, 20.3], [34.04, 19.8], [34.26, 23.1], [34.39, 21.6], [34.62, 18.1], [34.84, 18.4],
    [34.98, 23.1], [35.08, 31.1], [35.16, 30.4], [35.24, 24.1], [35.36, 19.7], [35.48, 15.9], [35.64, 21.4], [35.73, 18.5],
    [35.82, 24.3], [35.9, 42.3], [35.99, 43.4], [36.07, 43.1], [36.15, 45.8], [36.24, 54.5], [36.33, 40.5], [36.41, 42],
    [36.49, 39.2], [36.58, 40.5], [36.66, 39.7], [36.74, 14.6], [36.83, 16.6], [36.93, 13.8], [37.22, 12.6], [37.48, 15.2],
    [37.81, 17.7], [37.93, 15], [38.06, 13], [38.16, 12.6], [38.26, 15.4], [38.4, 13.9], [38.5, 15.7], [38.75, 17.7], [38.88, 15.6],
    [39.15, 17.5], [39.3, 13.9], [39.4, 16.6], [39.66, 13.7], [39.75, 20.7], [39.83, 13.7], [40.04, 14.5], [40.24, 12.6],
    [40.33, .1], [40.42, 11.7], [40.7, 12.7], [40.83, 11], [40.98, 12.8], [41.2, 11.2], [41.53, 10.1], [41.7, 11.6],
    [41.91, 8.4], [42.3, 9.9], [42.57, 7.1], [42.82, 9.1], [42.93, 5.6], [43.05, 3.8], [43.3, 3.3], [43.6, 5.9],
    [43.73, 3.8], [43.9, 5.2], [44.26, 5.2], [44.5, 3.5], [44.8, 4.3], [45.2, 4], [45.3, 2.5], [45.7, 3], [46.4, 3.8],
    [46.8, 2.5], [47.07, 4.4], [47.6, 2.8], [48.47, 4.2], [48.9, 3.5], [49.46, 2.3], [49.68, 2.2], [49.76, 14.9],
    [49.85, 1.7], [51.7, 1.6], [52.25, 2.9], [52.4, 1.6], [53.35, 1.3], [53.8, 3], [54.18, 4.7], [54.4, 3], [54.76, 4.5],
    [54.92, 4.9], [55, 8], [55.08, 10.2], [55.16, 8.7], [55.27, 10.6], [55.37, 12.6], [55.52, 11.8], [55.63, 15.8],
    [55.72, 12.9], [56, 14.7], [56.16, 19.2], [56.26, 16.1], [56.36, 18.1], [56.49, 16.8], [56.66, 19], [56.86, 17.5],
    [57, 20.6], [57.12, 19.7], [57.24, 25.6], [57.34, 20.2], [57.5, 17.5], [57.73, 20], [57.87, 17.8], [58, 19.1],
    [58.18, 17.8], [58.26, 22], [58.35, 17.8], [58.5, 22.1], [58.7, 22.1], [58.97, 18.6], [59.07, 16], [59.16, 17],
    [59.26, 15.9], [59.34, 22.7], [59.43, 19.2], [59.68, 15.7], [59.76, 27.8], [59.84, 39.4], [59.93, 38], [60.01, 37.9],
    [60.09, 36], [60.17, 18], [60.26, 12.9], [60.35, 14.8], [60.58, 11.4], [60.79, 14.5], [60.87, 11.9], [60.98, 14.2],
    [61.08, 11.6], [61.17, 29.8], [61.26, 10.4], [61.42, 12.4], [61.62, 9.7], [61.9, 17], [62, 16.2], [62.16, 12.7],
    [62.28, 13.7], [62.4, 11.9], [62.6, 14], [62.9, 11.3], [63.1, 15.4], [63.25, 19.9], [63.35, 15.5], [63.47, 13.1],
    [63.77, 16.6], [64, 12.4], [64.2, 10.5], [64.3, 13.2], [64.43, 15.4], [64.52, 10.9], [64.9, 12.4], [65, 9.5],
    [65.3, 11.4], [65.6, 9], [65.8, 9.6], [65.92, 8.5], [66.16, 8.6], [66.28, 6.4], [66.56, 8.4], [66.65, 6.6], [66.78, 7],
    [66.86, 5.3], [67.1, 3.5], [67.4, 4.8], [68.23, 5], [68.4, 3.5], [68.56, 4.9], [69.2, 3.3], [69.7, 4.7], [70, 3.4],
    [70.2, 4.9], [70.5, 3.3], [70.7, 4.5], [71, 2.3], [71.5, 2.7], [71.7, 2.3], [71.93, 3.9]
];

const SAMPLES_PER_HOUR = 12;

// fill the 5 minute samples between the recorded peaks
function resample(knots, seed) {
    const rand = () => {
        seed = (seed * 16807) % 2147483647;
        return seed / 2147483647 - 0.5;
    };
    const samples = [];
    for (let k = 0; k < knots.length - 1; k++) {
        const from = Math.round(knots[k][0] * SAMPLES_PER_HOUR);
        const to = Math.round(knots[k + 1][0] * SAMPLES_PER_HOUR);
        for (let i = from; i < to; i++) {
            const value = knots[k][1] + (knots[k + 1][1] - knots[k][1]) * (i - from) / (to - from);
            const spread = value > 90 ? 0.6 : value > 8 ? 2.4 : value > 2 ? 1.5 : 0.7;
            samples[i] = i === from ? value : value + rand() * spread;
        }
    }
    samples[Math.round(knots[knots.length - 1][0] * SAMPLES_PER_HOUR)] = knots[knots.length - 1][1];
    return samples;
}

function renderChart() {
    const svg = document.getElementById('chart');
    const { width, height } = svg.getBoundingClientRect();
    const left = 15, top = 8, right = Math.round(width) - 55, bottom = Math.round(height) - 41;
    const x = hour => left + 5 + hour * (right - left - 9) / 72;
    const y = value => bottom - 20 - value * (bottom - top - 20) / 100;
    const crisp = n => Math.round(n) + 0.5;

    let grid = '', ticks = '', labels = '';
    for (let hour = 0; hour <= 72; hour += 1.5) {
        const px = crisp(x(hour));
        const major = hour % 6 === 0;
        ticks += `<path class="tick" d="M${px} ${bottom}v${major ? 5 : 3}"/>`;
        if (major) {
            const day = 13 + Math.floor(hour / 24);
            grid += `<path class="grid" d="M${px} ${top}V${bottom}"/>`;
            labels += `<text x="${px - 1}" y="${bottom + 17}" text-anchor="middle">${String(hour % 24).padStart(2, '0')}:00</text>` +
                `<text x="${px - 1}" y="${bottom + 30}" text-anchor="middle">${day}/09/2017</text>`;
        }
    }
    for (let value = 0; value <= 100; value += 1.25) {
        const py = crisp(y(value));
        const major = value % 5 === 0;
        ticks += `<path class="tick" d="M${right} ${py}h${major ? 5 : 3}"/>`;
        if (major) {
            labels += `<text x="${right + 6}" y="${py + 4}">${value}</text>`;
        }
    }

    const draw = (samples, color) => {
        const points = samples.map((value, i) => [x(i / SAMPLES_PER_HOUR).toFixed(1), y(Math.min(value, 100)).toFixed(1)]);
        const dots = points.map(p => `M${p[0] - 2.5} ${p[1]}a2.5 2.5 0 0 1 5 0a2.5 2.5 0 0 1-5 0z`);
        return `<polyline class="series ${color}" points="${points.join(' ')}"/>` +
            dots.map(d => `<path class="marker fill-${color}" d="${d}"/>`).join('');
    };

    svg.innerHTML = `
        <defs>
            <linearGradient id="plotFill" x1="0" y1="0" x2="1" y2="1">
                <stop offset="0" stop-color="#e8e8e8"/><stop offset="1" stop-color="#f2f2f2"/>
            </linearGradient>
            <clipPath id="plotClip"><rect x="${left}" y="${top}" width="${right - left}" height="${bottom - top}"/></clipPath>
        </defs>
        <rect x="${left}" y="${top}" width="${right - left}" height="${bottom - top}" fill="url(#plotFill)"/>
        ${grid}
        <rect class="axis" x="${left + 0.5}" y="${top + 0.5}" width="${right - left}" height="${bottom - top}"/>
        <g clip-path="url(#plotClip)">${draw(resample(oas1, 17), 'blue')}${draw(resample(oas2, 91), 'orange')}</g>
        ${ticks}${labels}
        <text class="unit" text-anchor="middle" transform="translate(${right + 40} ${Math.round(height * 0.463)}) rotate(-90)">Percent (%)</text>`;
}

renderTree();
renderChart();
window.addEventListener('resize', renderChart);
```
